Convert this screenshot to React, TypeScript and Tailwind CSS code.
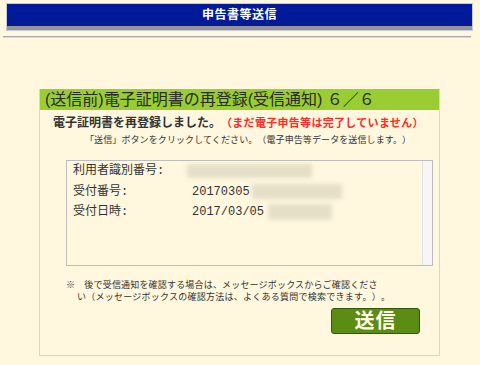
const jp = { fontFamily: '"Liberation Sans", "Noto Sans CJK JP", sans-serif' };

function Blur({ className }: { className: string }) {
  return <span className={`inline-block bg-[#e6dfc8] blur-[2px] ${className}`} />;
}

export default function App() {
  return (
    <div
      className="w-[480px] h-[365px] overflow-hidden bg-[#fff7de] text-[#222] [text-spacing-trim:space-all]"
      style={jp}
    >
      {/* header */}
      <div className="ml-[6px] mt-[3px] w-[467px] border border-[#c9c9dc]">
        <div className="h-[22px] bg-[#001a9a] flex items-center justify-center text-white text-[12px] font-bold tracking-[0.5px]">
          申告書等送信
        </div>
        <div className="h-[4px] bg-[#959595]" />
      </div>
      <div className="ml-[3px] mt-[5px] w-[468px] h-[2px] bg-[#a9a9a9] border-b border-[#d8d8d8]" />

      {/* panel */}
      <div className="ml-[39px] mt-[51px] w-[401px] h-[267px] border border-[#dcd7c2] border-t-0">
        <div className="h-[21px] bg-[#9acd32] pl-[5px] text-[16px] leading-[21px] text-[#2a2a2a] whitespace-nowrap">
          (送信前)電子証明書の再登録(受信通知) ６／６
        </div>

        <div className="mt-[4px] pl-[13px] leading-[16px] whitespace-nowrap">
          <span className="text-[12px] font-bold text-[#333]">電子証明書を再登録しました。</span>
          <span className="text-[11px] font-semibold tracking-[0.3px] text-[#ff2a2a]">（まだ電子申告等は完了していません）</span>
        </div>
        <div className="mt-[3px] pl-[45px] text-[9px] leading-[12px] tracking-[0.1px] text-[#333] whitespace-nowrap">
          「送信」ボタンをクリックしてください。（電子申告等データを送信します。）
        </div>

        {/* receipt box */}
        <div
          className="mt-[14px] ml-[26px] w-[367px] h-[106px] border border-[#bdbdbd] flex"
          style={{ fontFamily: '"Liberation Mono", "Noto Sans CJK JP", monospace' }}
        >
          <div className="flex-1 pl-[6px] text-[12px] leading-[20.5px] text-[#333]">
            <div className="flex items-center">
              <span className="w-[114px]">利用者識別番号:</span>
              <Blur className="w-[125px] h-[14px]" />
            </div>
            <div className="flex items-center">
              <span className="w-[119px]">受付番号:</span>
              <span>20170305</span>
              <Blur className="ml-[2px] w-[90px] h-[15px]" />
            </div>
            <div className="flex items-center">
              <span className="w-[119px]">受付日時:</span>
              <span>2017/03/05</span>
              <Blur className="ml-[4px] w-[64px] h-[16px]" />
            </div>
          </div>
          <div className="w-[10px] bg-[#f6f6f8] border-l border-[#e2e2e2]" />
        </div>

        <div className="mt-[13px] pl-[26px] text-[9px] leading-[12px] tracking-[0.18px] text-[#333] whitespace-nowrap">
          <div>※　後で受信通知を確認する場合は、メッセージボックスからご確認くださ</div>
          <div className="pl-[11px] tracking-[0.25px]">い（メッセージボックスの確認方法は、よくある質問で検索できます。）。</div>
        </div>

        <div className="mt-[5px] flex justify-end pr-[19px]">
          <button className="w-[89px] h-[26px] rounded-[3px] bg-[#5b8c13] border border-[#35540c] text-[#fffbe8] text-[20px] font-bold leading-none flex items-center justify-center tracking-[1px]">
            送信
          </button>
        </div>
      </div>
    </div>
  );
}
